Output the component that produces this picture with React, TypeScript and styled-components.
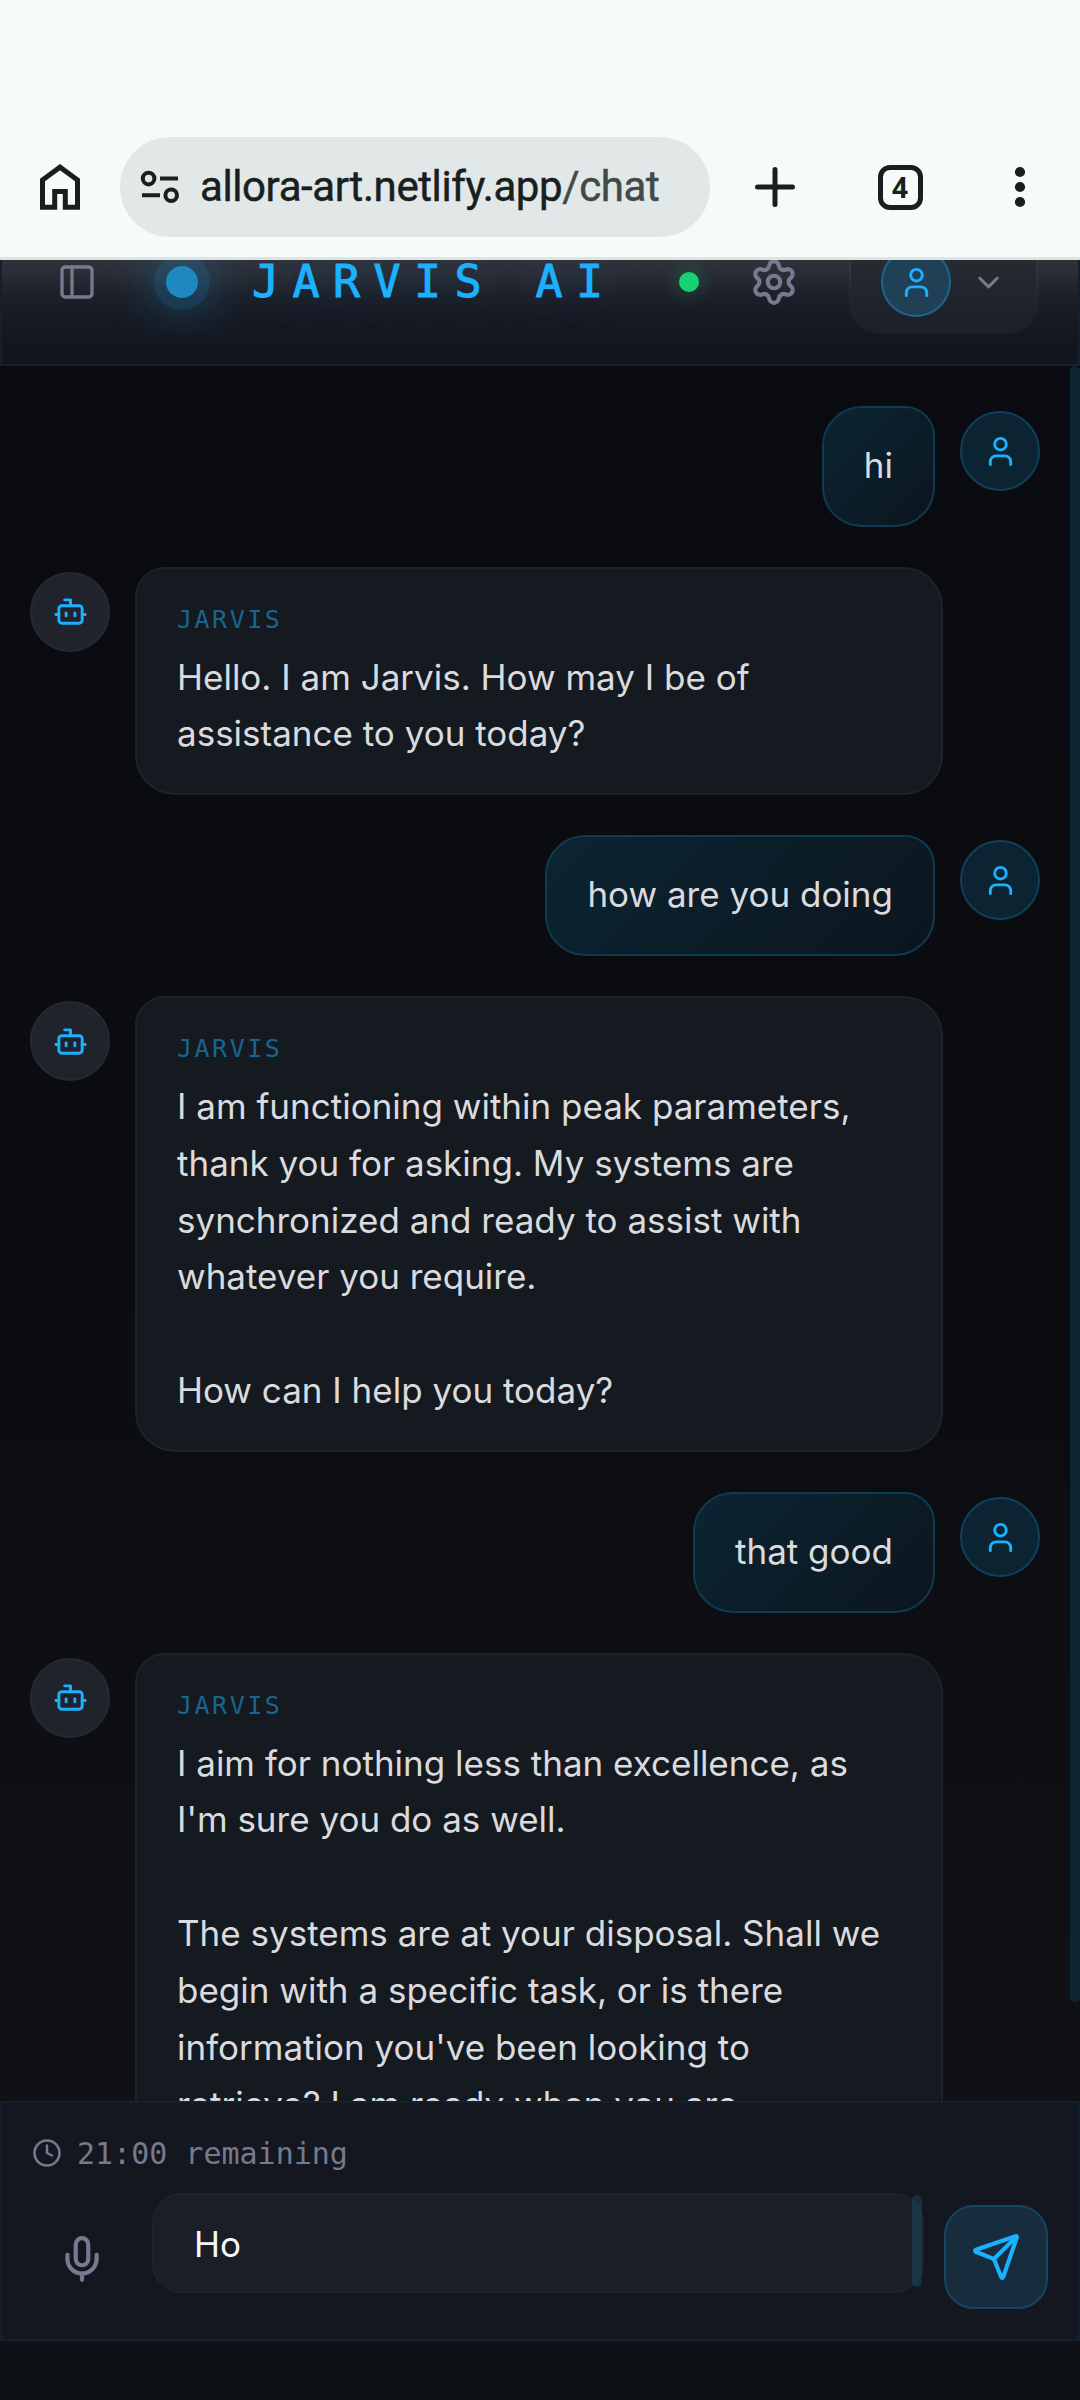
import React from "react";
import styled, { createGlobalStyle, css } from "styled-components";
import { Bot, ChevronDown, Clock, Mic, PanelLeft, Send, Settings, User } from "lucide-react";

const BLUE = "#1bb1ff";
const MUTED = "#757a8e";
const SANS = `Inter, "Liberation Sans", sans-serif`;
const MONO = `"DejaVu Sans Mono", "Liberation Mono", monospace`;

const GlobalStyle = createGlobalStyle`
  * { box-sizing: border-box; }
  body { margin: 0; background: #0e1116; }
  svg { display: block; flex: none; }
`;

const Screen = styled.div`
  width: 1080px;
  height: 2400px;
  overflow: hidden;
  display: flex;
  flex-direction: column;
  font-family: ${SANS};
`;

/* Browser toolbar */
const BrowserBar = styled.div`
  height: 260px;
  flex: none;
  padding: 137px 50px 0 35px;
  display: flex;
  align-items: flex-start;
  background: #f5fbf8;
  border-bottom: 3px solid #dfe4e2;
  color: #191f1e;
`;

const BarIcon = styled.div<{ $width: number; $left?: number }>`
  width: ${(p) => p.$width}px;
  height: 100px;
  margin-left: ${(p) => p.$left ?? 0}px;
  flex: none;
  display: flex;
  align-items: center;
  justify-content: center;
`;

const AddressPill = styled.div`
  width: 590px;
  height: 100px;
  margin-left: 35px;
  padding-left: 20px;
  flex: none;
  display: flex;
  align-items: center;
  gap: 20px;
  border-radius: 50px;
  background: #e2e8e7;
`;

const Address = styled.span`
  font-family: Roboto, "Liberation Sans", sans-serif;
  font-size: 42px;
  letter-spacing: -0.4px;
  line-height: 50px;
  white-space: nowrap;
  -webkit-text-stroke: 0.5px currentColor;
`;

const AddressPath = styled.span`
  color: #414a48;
`;

const TabCount = styled.div`
  width: 45px;
  height: 45px;
  border: 5px solid #191f1e;
  border-radius: 12px;
  display: flex;
  align-items: center;
  justify-content: center;
  font: 700 28px/30px "Noto Sans", Roboto, sans-serif;
`;

/* Web page */
const Page = styled.div`
  flex: 1;
  min-height: 0;
  overflow: hidden;
  display: flex;
  flex-direction: column;
  justify-content: flex-end;
  padding-bottom: 59px;
  background: linear-gradient(180deg, #090b10 0%, #0b0d11 55%, #101216 88%, #0e1116 100%);
`;

const Header = styled.header`
  height: 168px;
  flex: none;
  padding: 0 40px 0 55px;
  display: flex;
  align-items: center;
  border: 2px solid #15202e;
  background: linear-gradient(180deg, #31333b 36%, #292c34 46%, #1d2029 58%, #171a23 72%, #13161e 90%);
  color: ${MUTED};
`;

const Orb = styled.div`
  width: 56px;
  height: 56px;
  margin-left: 57px;
  flex: none;
  display: flex;
  align-items: center;
  justify-content: center;
  border-radius: 50%;
  background: rgba(27, 177, 255, 0.2);
  box-shadow: 0 0 50px rgba(27, 177, 255, 0.32);
`;

const OrbCore = styled.div`
  width: 32px;
  height: 32px;
  border-radius: 50%;
  background: #1e88c1;
`;

const Title = styled.h1`
  width: 427px;
  margin: 0 0 0 42px;
  flex: none;
  color: ${BLUE};
  font: 400 45px/40px ${MONO};
  letter-spacing: 13.4px;
  white-space: nowrap;
  -webkit-text-stroke: 1px ${BLUE};
  text-shadow: 0 0 50px rgba(27, 177, 255, 0.3);
`;

const StatusDot = styled.div`
  width: 20px;
  height: 20px;
  margin-right: 50px;
  flex: none;
  border-radius: 50%;
  background: #18d174;
  box-shadow: 0 0 20px rgba(24, 209, 116, 0.4);
`;

const AccountButton = styled.div`
  height: 104px;
  margin-left: auto;
  padding: 0 30px;
  display: flex;
  align-items: center;
  gap: 20px;
  border: 2px solid rgba(255, 255, 255, 0.03);
  border-radius: 30px;
  background: linear-gradient(180deg, #282a32 30%, #1d2028 90%);
  background-clip: padding-box;
`;

const Avatar = styled.div<{ $kind: "user" | "bot" | "account" }>`
  width: ${(p) => (p.$kind === "account" ? 70 : 80)}px;
  height: ${(p) => (p.$kind === "account" ? 70 : 80)}px;
  margin-top: ${(p) => (p.$kind === "account" ? 0 : 5)}px;
  flex: none;
  display: flex;
  align-items: center;
  justify-content: center;
  border-radius: 50%;
  color: ${BLUE};
  ${(p) =>
    p.$kind === "bot"
      ? css`
          background: #21232c;
          border: 2px solid #262932;
        `
      : p.$kind === "user"
      ? css`
          background: #0c2331;
          border: 2px solid #0f405b;
        `
      : css`
          background: #204055;
          border: 2px solid #1b668f;
        `}
`;

const Conversation = styled.main`
  height: 1735px;
  flex: none;
  display: flex;
  align-items: flex-start;
  overflow: hidden;
`;

const Messages = styled.div`
  width: 1070px;
  padding: 40px 30px 0;
  flex: none;
  display: flex;
  flex-direction: column;
  gap: 40px;
`;

const ScrollThumb = styled.div`
  width: 10px;
  height: 1636px;
  border-radius: 5px;
  background: #0d2433;
`;

const MessageRow = styled.div<{ $user?: boolean }>`
  display: flex;
  flex-direction: ${(p) => (p.$user ? "row-reverse" : "row")};
  align-items: flex-start;
  gap: 25px;
`;

const Bubble = styled.div<{ $user?: boolean }>`
  padding: ${(p) => (p.$user ? "29px 40px 31px" : "31px 40px")};
  color: #dadbde;
  font-size: 35px;
  line-height: 56.875px;
  white-space: pre;
  ${(p) =>
    p.$user
      ? css`
          border: 2px solid #0e3a52;
          border-radius: 40px 30px 40px 40px;
          background: linear-gradient(135deg, #0c2433, #0b161e);
        `
      : css`
          width: 808px;
          border: 2px solid #1e232b;
          border-radius: 30px 40px 40px 40px;
          background: #151920;
        `}
`;

const Sender = styled.div`
  margin-bottom: 8px;
  color: #18658f;
  font: 400 25px/40.625px ${MONO};
  letter-spacing: 2.5px;
`;

const Composer = styled.footer`
  height: 240px;
  flex: none;
  padding: 30px;
  display: flex;
  flex-direction: column;
  justify-content: space-between;
  border: 2px solid #15202d;
  background: #14171f;
  color: ${MUTED};
`;

const Remaining = styled.div`
  height: 40px;
  display: flex;
  align-items: center;
  gap: 15px;
  font: 400 30px/40px ${MONO};
`;

const RemainingText = styled.span`
  padding-top: 1px;
`;

const ComposerRow = styled.div`
  height: 116px;
  display: flex;
  align-items: flex-end;
  gap: 20px;
`;

const MicButton = styled.div`
  width: 100px;
  height: 100px;
  display: flex;
  align-items: center;
  justify-content: center;
`;

const Field = styled.div`
  flex: 1;
  height: 100px;
  align-self: flex-start;
  display: flex;
  align-items: flex-start;
  justify-content: space-between;
  padding-left: 40px;
  border: 2px solid #1f222a;
  border-radius: 30px;
  background: #1b1e26;
  color: #f5f6f8;
  font-size: 35px;
  line-height: 98px;
`;

const FieldThumb = styled.div`
  width: 10px;
  height: 92px;
  border-radius: 5px;
  background: rgba(27, 145, 205, 0.2);
`;

const SendButton = styled.div`
  width: 104px;
  height: 104px;
  flex: none;
  display: flex;
  align-items: center;
  justify-content: center;
  border: 2px solid #144663;
  border-radius: 30px;
  background: #172d3e;
  color: ${BLUE};
`;

type Message = { from: "user" | "bot"; text: string };

const conversation: Message[] = [
  { from: "user", text: "hi" },
  { from: "bot", text: "Hello. I am Jarvis. How may I be of\nassistance to you today?" },
  { from: "user", text: "how are you doing" },
  {
    from: "bot",
    text:
      "I am functioning within peak parameters,\nthank you for asking. My systems are\nsynchronized and ready to assist with\nwhatever you require.\n\nHow can I help you today?",
  },
  { from: "user", text: "that good" },
  {
    from: "bot",
    text:
      "I aim for nothing less than excellence, as\nI'm sure you do as well.\n\nThe systems are at your disposal. Shall we\nbegin with a specific task, or is there\ninformation you've been looking to\nretrieve? I am ready when you are.",
  },
];

const MessageItem = ({ message }: { message: Message }) => {
  const user = message.from === "user";
  return (
    <MessageRow $user={user}>
      <Avatar $kind={message.from}>{user ? <User size={35} /> : <Bot size={35} />}</Avatar>
      <Bubble $user={user}>
        {!user && <Sender>JARVIS</Sender>}
        <div>{message.text}</div>
      </Bubble>
    </MessageRow>
  );
};

export default function App() {
  return (
    <Screen>
      <GlobalStyle />
      <BrowserBar>
        <BarIcon $width={50}>
          <svg width="40" height="46" viewBox="0 0 40 46" fill="none" stroke="#191f1e" strokeWidth="5">
            <path d="M2.5 43.2V16L20 3.2 37.5 16v27.2H25.3V27.5H14.7v15.7z" />
          </svg>
        </BarIcon>
        <AddressPill>
          <svg width="40" height="34" viewBox="0 0 40 34" fill="none" stroke="#191f1e" strokeWidth="4">
            <circle cx="8.6" cy="8.6" r="5.8" />
            <path d="M20 8.6h18M2 25.2h18" />
            <circle cx="31.2" cy="25.2" r="5.8" />
          </svg>
          <Address>
            allora-art.netlify.app<AddressPath>/chat</AddressPath>
          </Address>
        </AddressPill>
        <BarIcon $width={50} $left={40}>
          <svg width="40" height="40" viewBox="0 0 40 40" stroke="#191f1e" strokeWidth="5" strokeLinecap="round">
            <path d="M20 2.5v35M2.5 20h35" />
          </svg>
        </BarIcon>
        <BarIcon $width={50} $left={75}>
          <TabCount>4</TabCount>
        </BarIcon>
        <BarIcon $width={20} $left={85}>
          <svg width="12" height="42" viewBox="0 0 12 42" fill="#191f1e">
            <circle cx="6" cy="6" r="5.1" />
            <circle cx="6" cy="21" r="5.1" />
            <circle cx="6" cy="36" r="5.1" />
          </svg>
        </BarIcon>
      </BrowserBar>

      <Page>
        <Header>
          <PanelLeft size={40} />
          <Orb>
            <OrbCore />
          </Orb>
          <Title>JARVIS AI</Title>
          <StatusDot />
          <Settings size={50} />
          <AccountButton>
            <Avatar $kind="account">
              <User size={35} />
            </Avatar>
            <ChevronDown size={35} />
          </AccountButton>
        </Header>

        <Conversation>
          <Messages>
            {conversation.map((message, i) => (
              <MessageItem key={i} message={message} />
            ))}
          </Messages>
          <ScrollThumb />
        </Conversation>

        <Composer>
          <Remaining>
            <Clock size={30} />
            <RemainingText>21:00 remaining</RemainingText>
          </Remaining>
          <ComposerRow>
            <MicButton>
              <Mic size={50} />
            </MicButton>
            <Field>
              Ho
              <FieldThumb />
            </Field>
            <SendButton>
              <Send size={50} />
            </SendButton>
          </ComposerRow>
        </Composer>
      </Page>
    </Screen>
  );
}
